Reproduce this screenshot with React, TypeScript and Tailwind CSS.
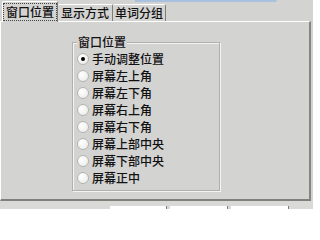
import React from 'react';

const tabs = [
  { label: '窗口位置', width: 'w-[56px]' },
  { label: '显示方式', width: 'w-[55px]' },
  { label: '单词分组', width: 'w-[53px]' },
];

const positions = [
  '手动调整位置',
  '屏幕左上角',
  '屏幕左下角',
  '屏幕右上角',
  '屏幕右下角',
  '屏幕上部中央',
  '屏幕下部中央',
  '屏幕正中',
];

function Radio({ checked }: { checked: boolean }) {
  return (
    <span className="flex h-[12px] w-[12px] shrink-0 items-center justify-center rounded-full border border-[#b4b4b1] bg-[radial-gradient(circle_at_35%_35%,#ffffff,#e8e8e6)]">
      {checked && <span className="h-[4px] w-[4px] rounded-full bg-black" />}
    </span>
  );
}

export default function App() {
  const selected = 0;

  return (
    <div className="relative flex h-[209px] w-[313px] flex-col overflow-hidden bg-[#d3d3d1] font-['Noto_Sans_CJK_SC',sans-serif] text-[12px] font-medium leading-none text-[#111]">
      {/* edge of the window above */}
      <div className="absolute left-[135px] top-0 z-20 h-[2px] w-[142px] rounded-br-[2px] bg-[#a9c1de]" />

      <div className="relative z-10 flex h-[21px] items-end pl-[2px]">
        {tabs.map((t, i) =>
          i === 0 ? (
            <div
              key={t.label}
              className={`${t.width} -mb-px flex h-[21px] items-center justify-center rounded-t-[2px] border-l border-r border-t border-l-white border-r-[#7d7e78] border-t-white bg-[#d3d3d1]`}
            >
              <span className="border border-dotted border-[#444] px-[2px] py-[2px]">
                {t.label}
              </span>
            </div>
          ) : (
            <div
              key={t.label}
              className={`${t.width} flex h-[17px] items-center justify-center rounded-t-[2px] border-r border-t border-r-[#7d7e78] border-t-white`}
            >
              {t.label}
            </div>
          ),
        )}
      </div>

      <div className="h-[180px] w-[311px] border-b-2 border-l border-r-2 border-t border-b-[#7f8079] border-l-white border-r-[#85867f] border-t-white pl-[71px] pt-[12px]">
        <fieldset className="h-[157px] w-[148px] border border-[#b0b0ad] shadow-[1px_1px_0_#f4f4f2,inset_1px_1px_0_#f4f4f2]">
          <legend className="ml-[4px] bg-[#d3d3d1] px-[1px] leading-[16px]">
            窗口位置
          </legend>
          <div className="flex flex-col">
            {positions.map((p, i) => (
              <label
                key={p}
                className="flex h-[17px] items-center gap-[3px] pl-[4px]"
              >
                <Radio checked={i === selected} />
                <span>{p}</span>
              </label>
            ))}
          </div>
        </fieldset>
      </div>

      <div className="flex flex-1 items-end bg-[#d9d9d7] pl-[110px]">
        <div className="flex gap-[3px]">
          <div className="h-[3px] w-[57px] border-r border-[#7d7e78] bg-white" />
          <div className="h-[3px] w-[58px] border-r border-[#7d7e78] bg-white" />
          <div className="h-[3px] w-[58px] border-r border-[#7d7e78] bg-white" />
        </div>
      </div>
    </div>
  );
}
